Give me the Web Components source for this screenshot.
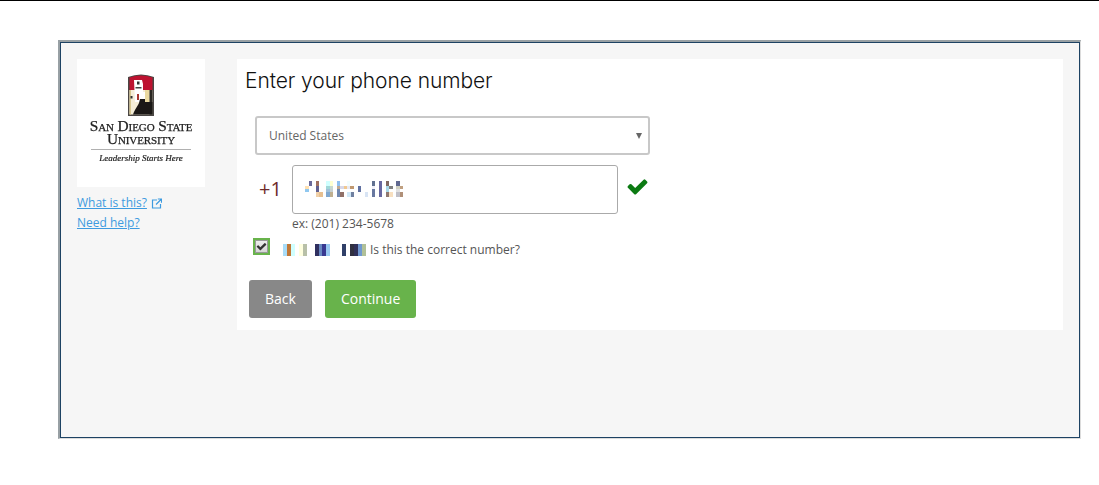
<!DOCTYPE html>
<html>
<head>
<meta charset="utf-8">
<title>Enter your phone number</title>
<style>
  html, body { margin: 0; padding: 0; background: #fff; }
  body { font-family: "Open Sans", sans-serif; border-top: 1px solid #000; padding: 39px 0 0 58px; }
</style>
</head>
<body>
<auth-frame>
  <auth-sidebar slot="side"></auth-sidebar>
  <phone-card>
    <country-select value="United States"></country-select>
    <phone-input></phone-input>
    <confirm-row>Is this the correct number?</confirm-row>
    <div slot="actions">
      <auth-button color="#888888">Back</auth-button>
      <auth-button color="#68b34b">Continue</auth-button>
    </div>
  </phone-card>
</auth-frame>

<script>
// paints a row list of [x, w, colour] blocks, used for the blurred-out digits
function mosaic(rows, width, height) {
  let rects = '';
  for (const [y, h, cells] of rows) {
    for (const [x, w, c] of cells) {
      rects += `<rect x="${x}" y="${y}" width="${w}" height="${h}" fill="${c}"/>`;
    }
  }
  return `<svg width="${width}" height="${height}" viewBox="0 0 ${width} ${height}" shape-rendering="crispEdges">${rects}</svg>`;
}

const CHECK = 'M1671 566q0 40-28 68l-724 724-136 136q-28 28-68 28t-68-28l-136-136-362-362q-28-28-28-68t28-68l136-136q28-28 68-28t68 28l294 295 656-657q28-28 68-28t68 28l136 136q28 28 28 68z';

class AuthFrame extends HTMLElement {
  constructor() {
    super();
    this.attachShadow({mode: 'open'});
    this.shadowRoot.innerHTML = `
    <style>
      :host {
        display: block;
        width: 1023px;
        height: 399px;
        box-sizing: border-box;
        border-style: solid;
        border-color: #98a0a4 #dcdcdc #dcdcdc #98a0a4;
        border-width: 2px 1px 1px 2px;
      }
      .inner {
        height: 100%;
        box-sizing: border-box;
        border: 1px solid #1d4263;
        background: #f6f6f6;
        padding: 16px 16px 0 16px;
        display: flex;
        gap: 32px;
        align-items: flex-start;
      }
    </style>
    <div class="inner">
      <slot name="side"></slot>
      <slot></slot>
    </div>`;
  }
}

class AuthSidebar extends HTMLElement {
  constructor() {
    super();
    this.attachShadow({mode: 'open'});
    this.shadowRoot.innerHTML = `
    <style>
      :host {
        display: block;
        width: 128px;
        font: 12px/20px "Open Sans", sans-serif;
      }
      .logo {
        height: 128px;
        background: #fff;
        display: flex;
        flex-direction: column;
        align-items: center;
        padding-top: 14px;
        box-sizing: border-box;
        font-family: "Liberation Serif", serif;
        color: #222;
        filter: blur(.35px);
      }
      .logo svg { display: block; margin-bottom: 3px; }
      .name {
        font-size: 15.4px;
        line-height: 12.5px;
        font-variant: small-caps;
        text-align: center;
        white-space: nowrap;
        letter-spacing: -.1px;
        -webkit-text-stroke: .25px #222;
      }
      .name + .name { margin-bottom: 4px; }
      .rule { width: 100px; height: 1px; background: #b0b0b0; }
      .motto {
        font-size: 9px;
        line-height: 12px;
        margin-top: 2px;
        font-style: italic;
        white-space: nowrap;
        -webkit-text-stroke: .2px #222;
      }
      .links { padding-top: 6px; display: flex; flex-direction: column; }
      .links div { display: flex; align-items: center; gap: 4px; }
      a { color: #3d9be0; text-decoration: underline; }
    </style>
    <div class="logo">
      <svg width="28" height="44" viewBox="0 0 28 44">
        <path d="M1 4 Q14 -1 27 4 V43 H1 Z" fill="#4a4644"/>
        <path d="M2.5 4.5 Q14 .6 25.5 4.5 V17 H2.5 Z" fill="#bd1230"/>
        <rect x="2.5" y="17" width="23" height="24.5" fill="#f5eed8"/>
        <rect x="2.5" y="17" width="1.5" height="24.5" fill="#d8c890"/>
        <rect x="3.5" y="23" width="2" height="2.5" fill="#333"/>
        <rect x="18" y="17" width="4.5" height="13" fill="#ead9a0"/>
        <rect x="22.5" y="17" width="3" height="24.5" fill="#2a2622"/>
        <path d="M7 7 H15 L16 11 V19 H18 V29 H8 Z" fill="#fff"/>
        <rect x="10" y="8.5" width="2.5" height="3" fill="#333"/>
        <rect x="8.5" y="14" width="6" height="1.5" fill="#444"/>
        <rect x="10" y="21" width="2" height="6" fill="#a8362e"/>
        <path d="M6 41.5 C8 36 10 34 12 30 L13 26 H18 V29 H25.5 V41.5 Z" fill="#1b1816"/>
      </svg>
      <div class="name">San Diego State</div>
      <div class="name">University</div>
      <div class="rule"></div>
      <div class="motto">Leadership Starts Here</div>
    </div>
    <div class="links">
      <div>
        <a href="#">What is this?</a>
        <svg width="11" height="11" viewBox="0 0 11 11" fill="none" stroke="#3d9be0" stroke-width="1.2">
          <path d="M6 2H1.5V10H9.5V6"/>
          <path d="M5 6.5L10 1.5M6.8 1H10.5V4.7"/>
        </svg>
      </div>
      <div><a href="#">Need help?</a></div>
    </div>`;
  }
}

class PhoneCard extends HTMLElement {
  constructor() {
    super();
    this.attachShadow({mode: 'open'});
    this.shadowRoot.innerHTML = `
    <style>
      :host {
        display: block;
        width: 826px;
        height: 271px;
        box-sizing: border-box;
        background: #fff;
        padding: 8px 8px 0 8px;
      }
      h1 {
        margin: 0 0 21px 0;
        font: 300 21px/28px Inter, sans-serif;
        color: #111;
        letter-spacing: -.08px;
      }
      .form { padding-left: 10px; }
      ::slotted([slot=actions]) {
        display: flex;
        gap: 13px;
        margin: 21px 0 0 4px;
      }
    </style>
    <h1>Enter your phone number</h1>
    <div class="form"><slot></slot></div>
    <slot name="actions"></slot>`;
  }
}

class CountrySelect extends HTMLElement {
  constructor() {
    super();
    this.attachShadow({mode: 'open'});
  }
  connectedCallback() {
    this.shadowRoot.innerHTML = `
    <style>
      :host {
        display: flex;
        align-items: center;
        justify-content: space-between;
        width: 395px;
        height: 39px;
        box-sizing: border-box;
        border: 2px solid #c8c8c8;
        border-radius: 3px;
        padding: 0 6px 0 12px;
        font: 12px "Open Sans", sans-serif;
        color: #666;
      }
      i { width: 0; height: 0; border: 3px solid transparent; border-top: 6px solid #666; border-bottom: 0; }
    </style>
    <span>${this.getAttribute('value')}</span><i></i>`;
  }
}

class PhoneInput extends HTMLElement {
  constructor() {
    super();
    this.attachShadow({mode: 'open'});
    const digits = mosaic([
      [4, 5, [[14,3,'#6a6a9a'],[21,3,'#a07060'],[31,4,'#d0ffff'],[35,3,'#ffffd0'],[42,3,'#90c0f0'],[52,3,'#f2fdff'],[77,3,'#607090'],[84,3,'#6868a0'],[91,3,'#806860'],[101,4,'#606890']]],
      [9, 3, [[10,4,'#ffe0b0'],[21,3,'#606090'],[31,4,'#a0d8d8'],[35,3,'#c8d8d0'],[42,3,'#c0a890'],[45,4,'#d8d8e8'],[49,3,'#f0c890'],[52,3,'#e8e8f0'],[55,4,'#c09870'],[63,3,'#6070a0'],[77,3,'#f0f0f8'],[84,3,'#6868a0'],[91,3,'#a8d8e8'],[94,4,'#808080'],[101,4,'#d0d0c0'],[105,3,'#c0a080']]],
      [12, 3, [[10,4,'#90c8f0'],[21,3,'#606090'],[31,4,'#a0c0d8'],[35,3,'#c8d0d0'],[42,3,'#7088b0'],[63,3,'#6070a0'],[77,3,'#6878a0'],[84,3,'#6868a0'],[91,3,'#a8d8e8'],[101,4,'#e0e0e0']]],
      [15, 5, [[21,3,'#f0d0a8'],[24,4,'#e8c090'],[31,4,'#80a8d0'],[35,3,'#c0b090'],[42,3,'#7088b0'],[45,4,'#907068'],[52,4,'#d0e8f8'],[56,3,'#7080a0'],[70,3,'#d8e4f4'],[77,3,'#6878a0'],[84,3,'#6868a0'],[91,3,'#907870'],[94,4,'#f8e0c0'],[101,4,'#c0c0c8'],[105,3,'#b09078']]]
    ], 110, 22);
    this.shadowRoot.innerHTML = `
    <style>
      :host {
        display: grid;
        grid-template-columns: 37px 326px auto;
        column-gap: 0;
        margin-top: 10px;
        font-family: "Open Sans", sans-serif;
      }
      .code { font-size: 20px; line-height: 47px; color: #6e2a2a; padding-left: 4px; }
      .box {
        height: 49px;
        box-sizing: border-box;
        border: 1px solid #aaa;
        border-radius: 3px;
        display: flex;
        padding: 11px 0 0 2px;
      }
      .ok { padding: 10px 0 0 8px; }
      .ok svg { display: block; }
      .hint { grid-column: 2; font-size: 12px; line-height: 20px; color: #555; }
    </style>
    <div class="code">+1</div>
    <div class="box">${digits}</div>
    <div class="ok">
      <svg width="23" height="23" viewBox="0 0 1792 1792"><path fill="#0b7a12" d="${CHECK}"/></svg>
    </div>
    <div class="hint">ex: (201) 234-5678</div>`;
  }
}

class ConfirmRow extends HTMLElement {
  constructor() {
    super();
    this.attachShadow({mode: 'open'});
    const masked = mosaic([
      [0, 12, [[0,4,'#a8dcf8'],[4,4,'#c07838'],[8,4,'#d0ffff'],[16,4,'#ffffe0'],[20,4,'#b8c0a8'],[32,4,'#303060'],[36,3,'#6888c0'],[39,4,'#383890'],[43,4,'#98c8f0'],[59,4,'#304068'],[67,4,'#303040'],[71,4,'#303058'],[75,4,'#7098d0'],[79,4,'#b0c098']]]
    ], 83, 12);
    this.shadowRoot.innerHTML = `
    <style>
      :host {
        display: flex;
        align-items: center;
        margin: 4px 0 0 -2px;
        font: 12px/18px "Open Sans", sans-serif;
        color: #555;
      }
      .check {
        width: 17px;
        height: 17px;
        box-sizing: border-box;
        border: 2px solid #68b34b;
        background: linear-gradient(#f0f0f0, #d4d4d4);
        box-shadow: inset 0 0 0 1px #999;
        display: flex;
        align-items: center;
        justify-content: center;
        margin-bottom: 4px;
      }
      .masked { margin: 3px 4px 0 13px; display: flex; }
      .text { padding-top: 3px; }
    </style>
    <span class="check">
      <svg width="11" height="11" viewBox="0 0 1792 1792"><path fill="#333" d="${CHECK}"/></svg>
    </span>
    <span class="masked">${masked}</span>
    <span class="text"><slot></slot></span>`;
  }
}

class AuthButton extends HTMLElement {
  constructor() {
    super();
    this.attachShadow({mode: 'open'});
  }
  connectedCallback() {
    this.shadowRoot.innerHTML = `
    <style>
      :host {
        display: block;
        font: 14px/38px "Open Sans", sans-serif;
        color: #fff;
        padding: 0 16px;
        border-radius: 3px;
        background: ${this.getAttribute('color')};
      }
    </style>
    <slot></slot>`;
  }
}

customElements.define('auth-frame', AuthFrame);
customElements.define('auth-sidebar', AuthSidebar);
customElements.define('phone-card', PhoneCard);
customElements.define('country-select', CountrySelect);
customElements.define('phone-input', PhoneInput);
customElements.define('confirm-row', ConfirmRow);
customElements.define('auth-button', AuthButton);
</script>
</body>
</html>
